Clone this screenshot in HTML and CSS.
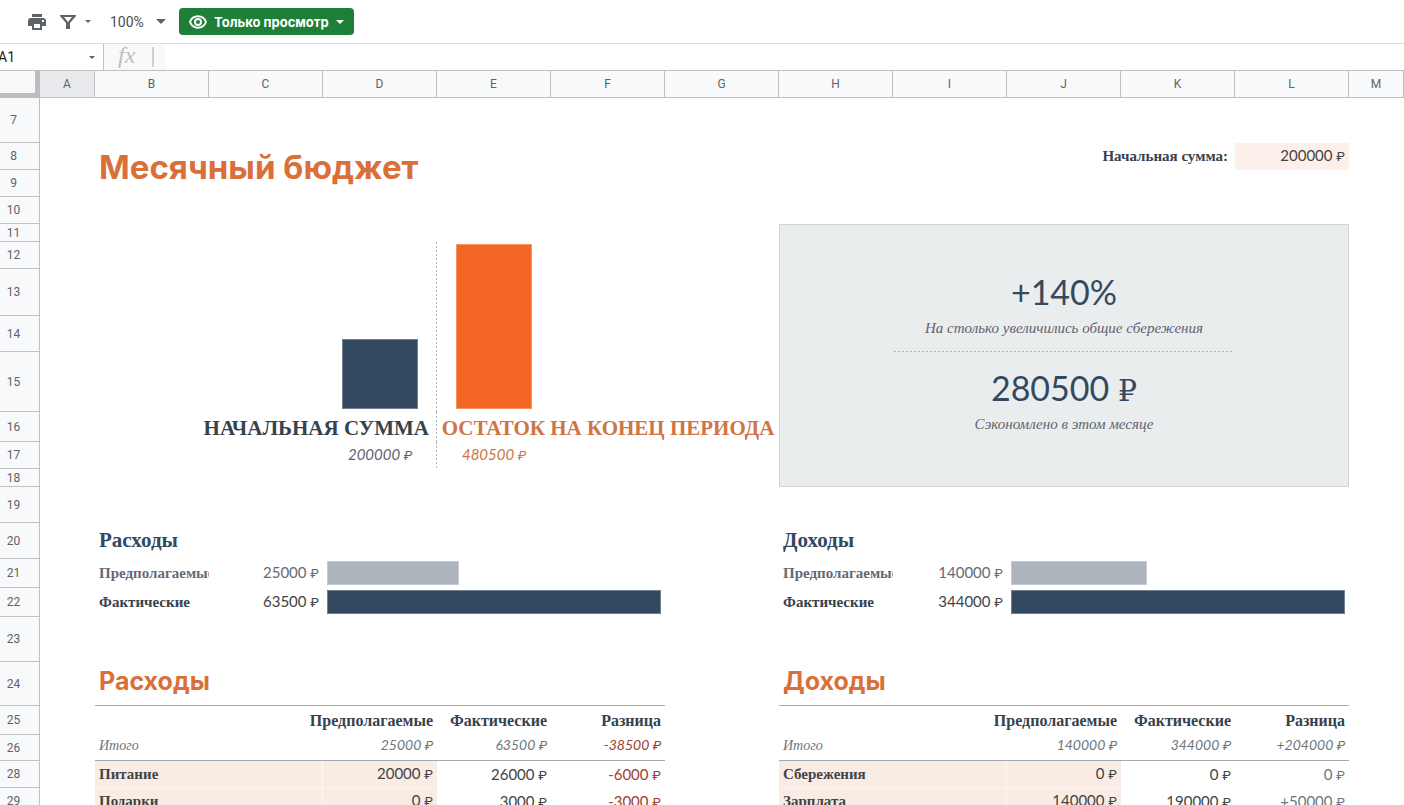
FILE: index.html
```html
<!DOCTYPE html>
<html lang="ru">
  <head>
    <meta charset="utf-8">
    <title>Месячный бюджет</title>
    <link rel="stylesheet" href="styles.css">
  </head>
  <body>
    <!-- Toolbar -->
    <div class="toolbar">
      <button class="tool_btn print_btn" aria-label="Печать">
        <svg width="18" height="16" viewBox="0 0 18 16">
          <path fill="#5f6368" d="M4 0h10v3H4zM3 4h12a3 3 0 0 1 3 3v5h-4V9H4v3H0V7a3 3 0 0 1 3-3zM4 9h10v7H4z"/>
          <path fill="#fff" d="M14 6h2v2h-2zM6 10h6v4H6z"/>
        </svg>
      </button>
      <button class="tool_btn filter_btn" aria-label="Фильтр">
        <svg width="16" height="14" viewBox="0 0 16 14">
          <path fill="#5f6368" fill-rule="evenodd" d="M0 0h16v1l-6 7v6H6V8L0 1zM4 2l4 5 4-5z"/>
        </svg>
        <svg width="6" height="3" viewBox="0 0 6 3"><path fill="#5f6368" d="M0 0h6L3 3z"/></svg>
      </button>
      <div class="zoom">
        <select class="zoom_select" aria-label="Масштаб">
          <option>100%</option>
        </select>
        <svg width="10" height="5" viewBox="0 0 10 5"><path fill="#5f6368" d="M0 0h10L5 5z"/></svg>
      </div>
      <button class="view_btn">
        <svg width="18" height="14" viewBox="0 0 18 14">
          <path fill="none" stroke="#fff" stroke-width="2" d="M1 7C4 -.6 14 -.6 17 7 14 14.600 4 14.600 1 7z"/>
          <circle cx="9" cy="7" r="3" fill="none" stroke="#fff" stroke-width="2"/>
        </svg>
        <span>Только просмотр</span>
        <svg width="8" height="4" viewBox="0 0 8 4"><path fill="#fff" d="M0 0h8L4 4z"/></svg>
      </button>
    </div>

    <!-- Name box and formula -->
    <div class="formula_bar">
      <input class="name_box" type="text" value="A1" aria-label="Ячейка">
      <button class="tool_btn name_btn" aria-label="Диапазоны">
        <svg width="6" height="3" viewBox="0 0 6 3"><path fill="#5f6368" d="M0 0h6L3 3z"/></svg>
      </button>
      <div class="fx"><label for="formula">fx</label></div>
      <input class="formula" id="formula" type="text">
    </div>

    <!-- Sheet -->
    <table class="sheet">
      <colgroup>
        <col class="col_num">
        <col class="col_edge">
        <col span="11">
        <col class="col_edge">
      </colgroup>
      <thead>
        <tr>
          <td class="corner"></td>
          <th class="active">A</th><th>B</th><th>C</th><th>D</th><th>E</th><th>F</th><th>G</th>
          <th>H</th><th>I</th><th>J</th><th>K</th><th>L</th><th>M</th>
        </tr>
      </thead>
      <tbody>
        <tr class="row_45"><th>7</th><td colspan="13"></td></tr>
        <tr class="row_27">
          <th>8</th><td></td>
          <td colspan="6" rowspan="2"><h1 class="title">Месячный бюджет</h1></td>
          <td colspan="2"></td>
          <td colspan="2" class="label right">Начальная сумма:</td>
          <td class="num start">200000 <span class="rub">₽</span></td>
          <td></td>
        </tr>
        <tr class="row_27"><th>9</th><td></td><td colspan="6"></td></tr>
        <tr class="row_27"><th>10</th><td colspan="13"></td></tr>
        <tr class="row_18">
          <th>11</th><td colspan="7"></td>
          <td colspan="5" rowspan="8" class="panel">
            <div class="panel_value percent">+140%</div>
            <div class="panel_note">На столько увеличились общие сбережения</div>
            <div class="panel_value saved">280500 <span class="rub">₽</span></div>
            <div class="panel_note">Сэкономлено в этом месяце</div>
          </td>
          <td></td>
        </tr>
        <tr class="row_27">
          <th>12</th><td colspan="3"></td>
          <td rowspan="4" class="column split"><div class="column_bar dark" style="height: 70px"></div></td>
          <td rowspan="4" class="column"><div class="column_bar orange" style="height: 165px"></div></td>
          <td colspan="2"></td><td></td>
        </tr>
        <tr class="row_47"><th>13</th><td colspan="3"></td><td colspan="2"></td><td></td></tr>
        <tr class="row_36"><th>14</th><td colspan="3"></td><td colspan="2"></td><td></td></tr>
        <tr class="row_60"><th>15</th><td colspan="3"></td><td colspan="2"></td><td></td></tr>
        <tr class="row_30">
          <th>16</th><td></td>
          <td colspan="3" class="caption right split">НАЧАЛЬНАЯ СУММА</td>
          <td colspan="3" class="caption center accent">ОСТАТОК НА КОНЕЦ ПЕРИОДА</td>
          <td></td>
        </tr>
        <tr class="row_27">
          <th>17</th><td colspan="3"></td>
          <td class="num center italic split">200000 <span class="rub">₽</span></td>
          <td class="num center italic accent">480500 <span class="rub">₽</span></td>
          <td colspan="2"></td><td></td>
        </tr>
        <tr class="row_18"><th>18</th><td colspan="7"></td><td></td></tr>
        <tr class="row_36"><th>19</th><td colspan="13"></td></tr>
        <tr class="row_36">
          <th>20</th><td></td>
          <td colspan="6"><h2 class="subtitle">Расходы</h2></td>
          <td colspan="5"><h2 class="subtitle">Доходы</h2></td>
          <td></td>
        </tr>
        <tr class="row_29">
          <th>21</th><td></td>
          <td class="label muted">Предполагаемые</td>
          <td class="num muted">25000 <span class="rub">₽</span></td>
          <td colspan="3"><div class="bar light" style="width: 39.4%"></div></td>
          <td></td>
          <td class="label muted">Предполагаемые</td>
          <td class="num muted">140000 <span class="rub">₽</span></td>
          <td colspan="3"><div class="bar light" style="width: 40.7%"></div></td>
          <td></td>
        </tr>
        <tr class="row_29">
          <th>22</th><td></td>
          <td class="label">Фактические</td>
          <td class="num">63500 <span class="rub">₽</span></td>
          <td colspan="3"><div class="bar dark" style="width: 100%"></div></td>
          <td></td>
          <td class="label">Фактические</td>
          <td class="num">344000 <span class="rub">₽</span></td>
          <td colspan="3"><div class="bar dark" style="width: 100%"></div></td>
          <td></td>
        </tr>
        <tr class="row_45"><th>23</th><td colspan="13"></td></tr>
        <tr class="row_44">
          <th>24</th><td></td>
          <td colspan="5" class="line"><h2 class="section">Расходы</h2></td>
          <td></td>
          <td colspan="5" class="line"><h2 class="section">Доходы</h2></td>
          <td></td>
        </tr>
        <tr class="row_29">
          <th>25</th><td></td>
          <td colspan="3" class="head">Предполагаемые</td>
          <td class="head">Фактические</td>
          <td class="head">Разница</td>
          <td></td>
          <td colspan="3" class="head">Предполагаемые</td>
          <td class="head">Фактические</td>
          <td class="head">Разница</td>
          <td></td>
        </tr>
        <tr class="row_26 total">
          <th>26</th><td></td>
          <td colspan="2" class="total_label line">Итого</td>
          <td class="num line">25000 <span class="rub">₽</span></td>
          <td class="num line">63500 <span class="rub">₽</span></td>
          <td class="num line negative">-38500 <span class="rub">₽</span></td>
          <td></td>
          <td colspan="2" class="total_label line">Итого</td>
          <td class="num line">140000 <span class="rub">₽</span></td>
          <td class="num line">344000 <span class="rub">₽</span></td>
          <td class="num line">+204000 <span class="rub">₽</span></td>
          <td></td>
        </tr>
        <tr class="row_27 item">
          <th>28</th><td></td>
          <td colspan="2" class="label plan">Питание</td>
          <td class="num plan">20000 <span class="rub">₽</span></td>
          <td class="num">26000 <span class="rub">₽</span></td>
          <td class="num negative">-6000 <span class="rub">₽</span></td>
          <td></td>
          <td colspan="2" class="label plan">Сбережения</td>
          <td class="num plan">0 <span class="rub">₽</span></td>
          <td class="num">0 <span class="rub">₽</span></td>
          <td class="num positive">0 <span class="rub">₽</span></td>
          <td></td>
        </tr>
        <tr class="row_27 item">
          <th>29</th><td></td>
          <td colspan="2" class="label plan">Подарки</td>
          <td class="num plan">0 <span class="rub">₽</span></td>
          <td class="num">3000 <span class="rub">₽</span></td>
          <td class="num negative">-3000 <span class="rub">₽</span></td>
          <td></td>
          <td colspan="2" class="label plan">Зарплата</td>
          <td class="num plan">140000 <span class="rub">₽</span></td>
          <td class="num">190000 <span class="rub">₽</span></td>
          <td class="num positive">+50000 <span class="rub">₽</span></td>
          <td></td>
        </tr>
      </tbody>
    </table>
  </body>
</html>
```
FILE: styles.css
```css
* {
  box-sizing: border-box;
}

body {
  margin: 0;
  height: 100vh;
  overflow: hidden;
  background: #fff;
  color: #334960;
  font-family: Roboto, "Liberation Sans", sans-serif;
}

button,
input,
select {
  border: 0;
  padding: 0;
  background: none;
  font-family: inherit;
}

/* Toolbar */
.toolbar {
  display: flex;
  align-items: center;
  height: 44px;
  padding-left: 28px;
  border-bottom: 1px solid #dadce0;
}

.tool_btn {
  display: flex;
  align-items: center;
  cursor: pointer;
}

.print_btn {
  margin-right: 14px;
}

.filter_btn {
  gap: 9px;
  margin-right: 19px;
}

.zoom {
  display: flex;
  align-items: center;
  margin-right: 13px;
}

.zoom_select {
  appearance: none;
  width: 46px;
  color: #4a4d51;
  font-size: 14px;
}

.view_btn {
  display: flex;
  align-items: center;
  gap: 7px;
  height: 27px;
  padding: 0 10px;
  border-radius: 4px;
  background: #1e8038;
  color: #fff;
  font-family: Inter, sans-serif;
  font-size: 13px;
  font-weight: 700;
  cursor: pointer;
}

/* Formula bar */
.formula_bar {
  display: flex;
  height: 26px;
}

.name_box {
  width: 91px;
  margin-left: -2px;
  color: #222;
  font-size: 14px;
}

.name_btn {
  width: 15px;
  border-right: 1px solid #c0c0c0;
}

.fx {
  display: flex;
  align-items: center;
  width: 61px;
  padding-left: 14px;
  background: #f8f9fa;
}

.fx label {
  width: 36px;
  height: 20px;
  border-right: 2px solid #d0d0d0;
  color: #c0c0c0;
  font-family: "Liberation Serif", serif;
  font-size: 24px;
  font-style: italic;
  line-height: 16px;
}

.formula {
  flex: 1;
}

/* Sheet */
.sheet {
  width: 100%;
  table-layout: fixed;
  border-collapse: separate;
  border-spacing: 0;
}

.col_num {
  width: 40px;
}

.col_edge {
  width: 55px;
}

.sheet th {
  padding: 0;
  border-right: 1px solid #c0c0c0;
  border-bottom: 1px solid #c0c0c0;
  background: #f8f9fa;
  color: #5f6368;
  font-size: 12px;
  font-weight: 400;
  line-height: 14px;
}

.sheet thead th {
  height: 28px;
  border-top: 1px solid #c0c0c0;
}

.sheet thead .active {
  background: #e8eaed;
}

.sheet .corner {
  border-top: 1px solid #c0c0c0;
  border-right: 5px solid #bdbdbd;
  border-bottom: 5px solid #bdbdbd;
  background: #f8f9fa;
}

.sheet tbody th {
  padding-right: 12px;
}

.sheet td {
  padding: 0 4px 2px;
  overflow: hidden;
  white-space: nowrap;
}

.row_18 { height: 18px; }
.row_26 { height: 26px; }
.row_27 { height: 27px; }
.row_29 { height: 29px; }
.row_30 { height: 30px; }
.row_36 { height: 36px; }
.row_44 { height: 44px; }
.row_45 { height: 45px; }
.row_47 { height: 47px; }
.row_60 { height: 60px; }

/* Headings */
.title,
.section {
  margin: 0;
  color: #d9703a;
  font-family: Inter, sans-serif;
  font-weight: 700;
}

.title {
  padding-bottom: 4px;
  font-size: 33px;
  line-height: 40px;
}

.section {
  padding-bottom: 4px;
  font-size: 25px;
  line-height: 32px;
}

.subtitle {
  margin: 0;
  color: #334960;
  font-family: "Liberation Serif", serif;
  font-size: 21px;
  line-height: 24px;
}

/* Cell text */
.label,
.head,
.caption {
  color: #36424c;
  font-family: "Liberation Serif", serif;
  font-weight: 700;
}

.label {
  font-size: 15px;
  line-height: 18px;
}

.head {
  font-size: 16px;
  line-height: 20px;
  text-align: right;
}

.caption {
  font-size: 21px;
  line-height: 24px;
}

.num {
  color: #434343;
  font-family: Lato, sans-serif;
  font-size: 15px;
  line-height: 20px;
  text-align: right;
}

.rub {
  font-family: Roboto, sans-serif;
  font-size: 13px;
}

.right {
  text-align: right;
}

.sheet .label.right {
  padding-right: 7px;
}

.center {
  text-align: center;
}

.italic {
  font-style: italic;
}

.muted {
  color: #666a73;
}

.num.italic {
  color: #5f6370;
}

.accent,
.num.accent {
  color: #cf7442;
}

.negative {
  color: #a04030;
}

.positive {
  color: #6b7880;
}

.start {
  background: #fdf0ea;
}

.sheet .caption {
  padding: 2px 3px 0;
}

.sheet .caption.right {
  padding-right: 8px;
}

.sheet .head,
.sheet .item td {
  padding-top: 2px;
}

/* Columns chart */
.sheet .column {
  padding-bottom: 3px;
  vertical-align: bottom;
}

.split {
  background: repeating-linear-gradient(to bottom, #b0b4b8 0 2px, transparent 2px 4px) right / 1px 100% no-repeat;
}

.column_bar {
  width: 72%;
  margin: 0 auto;
}

.bar {
  height: 24px;
}

.column_bar,
.bar {
  border: 1px solid rgba(255, 255, 255, 0.3);
}

.dark {
  background: #33495f;
}

.light {
  background: #acb5bd;
}

.orange {
  background: #f46524;
}

/* Savings panel */
.sheet .panel {
  padding: 43px 0 0;
  border: 1px solid #d0d4d5;
  background: #eaeded;
  text-align: center;
  vertical-align: top;
}

.panel_value {
  color: #334960;
  font-family: Lato, sans-serif;
  font-size: 34px;
}

.panel_value .rub {
  font-family: "DejaVu Serif", serif;
  font-size: 30px;
}

.percent {
  height: 48px;
  line-height: 47px;
}

.saved {
  width: 60%;
  height: 61px;
  margin: 0 auto;
  background: repeating-linear-gradient(to right, #b0b4b8 0 2px, transparent 2px 4px) top / 100% 1px no-repeat;
  line-height: 74px;
}

.panel_note {
  height: 35px;
  color: #5f6370;
  font-family: "Liberation Serif", serif;
  font-size: 15px;
  font-style: italic;
  line-height: 24px;
}

/* Budget tables */
.line {
  border-bottom: 1px solid #a3a9ae;
}

.total .num,
.total_label {
  font-size: 14px;
  font-style: italic;
}

.sheet .total .line {
  padding-bottom: 4px;
}

.total td:not(.negative) {
  color: #6b7880;
}

.total_label {
  font-family: "Liberation Serif", serif;
}

.plan {
  border-bottom: 1px solid #fdf7f4;
  background: #f9ece5;
}

.label.plan {
  border-right: 1px solid #fdf7f4;
}

.item .label {
  color: #434343;
}
```
